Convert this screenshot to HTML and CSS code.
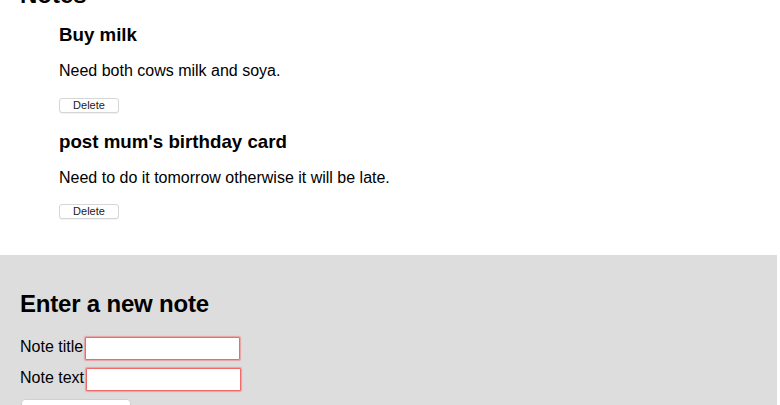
FILE: index.html
```html
<!DOCTYPE html>
<html lang="en">
<head>
<meta charset="utf-8">
<title>Notes</title>
<link rel="stylesheet" href="styles.css">
</head>
<body>
<section class="notes">
  <h1 class="notes-title">Notes</h1>
  <ul class="note-list">
    <li class="note">
      <h3 class="note-title">Buy milk</h3>
      <p class="note-text">Need both cows milk and soya.</p>
      <button class="delete-btn" type="button">Delete</button>
    </li>
    <li class="note">
      <h3 class="note-title">post mum's birthday card</h3>
      <p class="note-text">Need to do it tomorrow otherwise it will be late.</p>
      <button class="delete-btn" type="button">Delete</button>
    </li>
  </ul>
</section>
<section class="new-note">
  <h2 class="new-note-title">Enter a new note</h2>
  <form class="new-note-form">
    <div class="field"><label for="title">Note title</label> <input id="title" class="field-input" type="text" required></div>
    <div class="field"><label for="text">Note text</label> <input id="text" class="field-input" type="text" required></div>
    <button class="add-btn" type="submit">Add new note</button>
  </form>
</section>
</body>
</html>
```
FILE: styles.css
```css
html, body {
  margin: 0;
  padding: 0;
  background: #fff;
  font-family: "Liberation Sans", Arial, sans-serif;
  color: #000;
  overflow: hidden;
}

.notes {
  padding: 0 20px 18px;
  margin-right: 3px;
}

.notes-title {
  font-size: 24px;
  line-height: 28px;
  margin: -19px 0 0;
}

.note-list {
  list-style: none;
  margin: 0 0 16px;
  padding: 0 0 0 39px;
}

.note-title {
  font-size: 18.72px;
  line-height: 22px;
  margin: 15px 0 16px;
}

.note-text {
  font-size: 16px;
  line-height: 18px;
  margin: 0 0 17.5px;
}

.delete-btn {
  display: block;
  width: 60px;
  height: 15px;
  padding: 0;
  margin: 0 0 18px;
  font-family: "Liberation Sans", Arial, sans-serif;
  font-size: 11px;
  line-height: 13px;
  color: #222;
  background: #fff;
  border: 1px solid #d6d6d6;
  border-radius: 3px;
  box-shadow: 0 1px 1px rgba(0,0,0,0.06);
}

.new-note {
  background: #dddddd;
  margin-right: 3px;
  padding: 18px 20px 20px;
}

.new-note-title {
  font-size: 24px;
  line-height: 28px;
  margin: 17px 0 19px;
  letter-spacing: -0.2px;
}

.field {
  font-size: 16px;
  line-height: 19px;
  margin-bottom: 8px;
  display: flex;
  align-items: flex-start;
  gap: 2px;
}

.field-input {
  box-sizing: border-box;
  width: 155px;
  height: 23px;
  margin: 0;
  background: #fff;
  border: 1px solid #f06a6a;
  box-shadow: 0 0 1px 1px rgba(245, 110, 110, 0.55);
  border-radius: 1px;
  font-family: "Liberation Sans", Arial, sans-serif;
  font-size: 13px;
}

.add-btn {
  display: block;
  margin: 2px 0 0 1px;
  width: 110px;
  height: 24px;
  padding: 6px 0 0;
  font-family: "Liberation Sans", Arial, sans-serif;
  font-size: 12px;
  line-height: 14px;
  color: #222;
  background: #fff;
  border: 1px solid #d0d0d0;
  border-radius: 4px;
}
```
